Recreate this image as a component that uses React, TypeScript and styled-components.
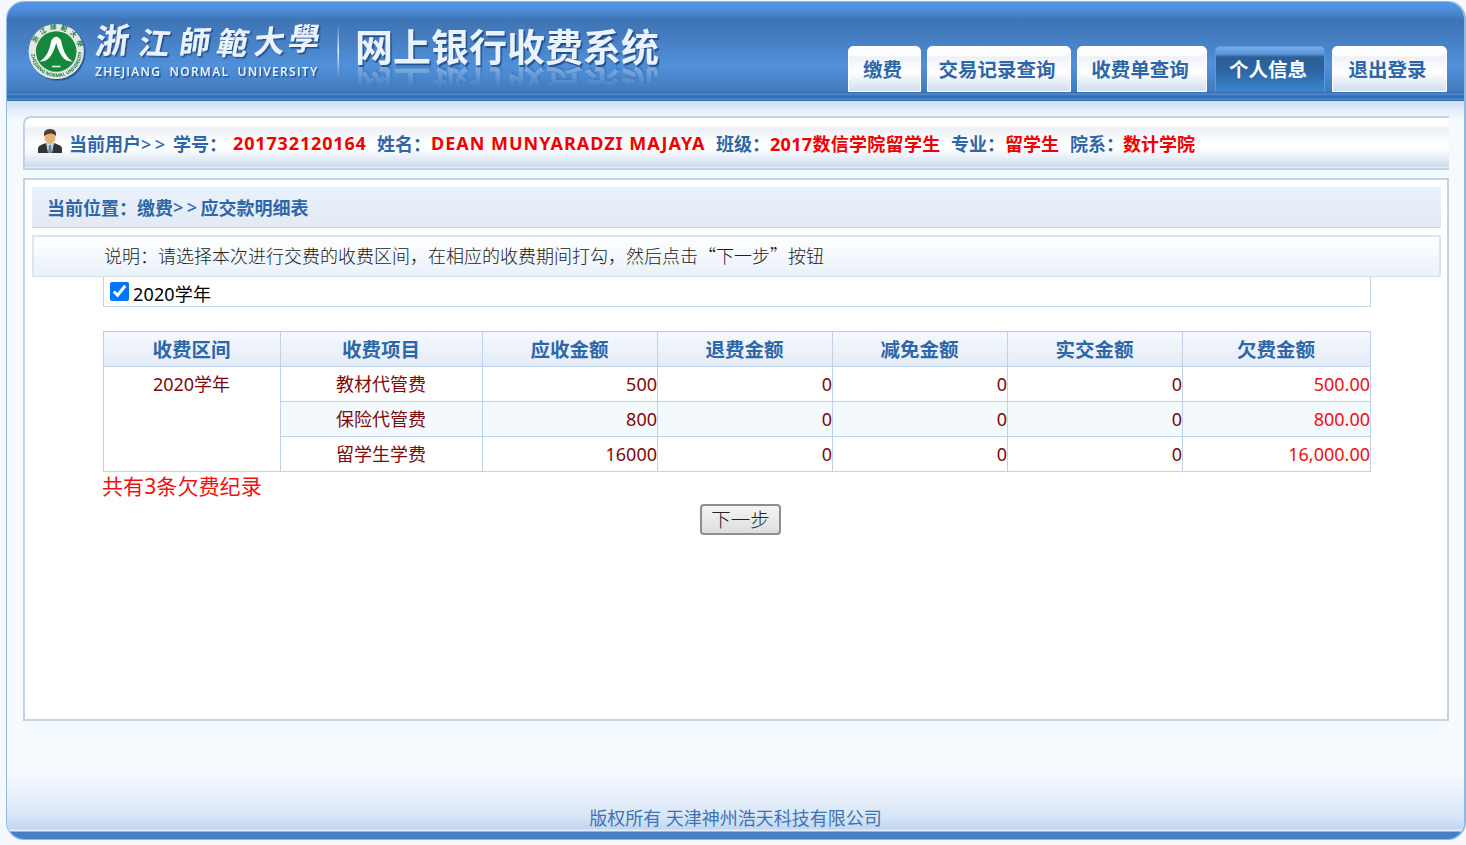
import React from 'react';
import styled, { createGlobalStyle, css } from 'styled-components';

const Global = createGlobalStyle`
  * { box-sizing: border-box; }
  body {
    margin: 0;
    background: #f5f9fe;
    font-family: 'Noto Sans', 'Noto Sans CJK SC', sans-serif;
    font-size: 18px;
  }
`;

const Frame = styled.div`
  width: 1460px;
  height: 839px;
  margin: 1px 0 5px 6px;
  border: 1px solid #8bbbe4;
  border-width: 1px 2px 1px 1px;
  border-radius: 18px;
  overflow: hidden;
  display: flex;
  flex-direction: column;
  background: #f5fafe;
`;

const Header = styled.header`
  height: 99px;
  flex: none;
  padding: 0 17px 0 0;
  display: flex;
  background: linear-gradient(
    #5596e8 0, #4d8bd9 9px, #3d74b3 18px, #4379bb 28px, #5090da 64px,
    #427bbd 89px, #3b70b0 90px, #3b70b0 91px, #5a92cf 92px, #3c78bf 93px, #2f6cb8 95px,
    #2f6cb8 96px, #5f97d2 97px, #3a75bb 98px, #3567a4 99px
  );
`;

const Brand = styled.svg`
  width: 348px;
  height: 99px;
  flex: none;
`;

const Title = styled.h1`
  margin: 23px 0 0;
  height: 40px;
  font: 700 38px/40px 'Noto Sans CJK SC', sans-serif;
  color: #eaf2fd;
  white-space: nowrap;
  text-shadow: 1.5px 1.5px 1px rgba(22, 62, 117, 0.75);
  -webkit-box-reflect: below 2px linear-gradient(transparent 50%, rgba(255, 255, 255, 0.3));
`;

const Tabs = styled.nav`
  margin-left: auto;
  display: flex;
  align-items: flex-start;
  padding-top: 44px;
  gap: 6px;
`;

const Tab = styled.a<{ $width: number; $active?: boolean }>`
  width: ${p => p.$width}px;
  height: 46px;
  border: 1px solid #fff;
  border-radius: 5px 5px 0 0;
  padding: 0 4px 1px 0;
  display: flex;
  align-items: center;
  justify-content: center;
  font-size: 19.5px;
  font-weight: 700;
  white-space: nowrap;
  color: #2e67a7;
  background: linear-gradient(#fff 0, #fff 8px, #edf1f8 10px, #fff 25px, #d0dff1 44px);
  ${p => p.$active && css`
    color: #fff;
    border-color: #5c99dc;
    border-bottom-color: #3a7abd;
    margin: 0 1px 0 2px;
    background: linear-gradient(#74aceb 0, #5c94d8 7px, #2d5f99 10px, #2c639f 22px, #3c86cf 45px);
  `}
`;

const Content = styled.main`
  flex: 1;
  padding: 15px 15px 0 16px;
  background: linear-gradient(#cbdcf1 0, #e3edf9 9px, #f5fafe 20px);
`;

const UserBar = styled.section`
  height: 54px;
  border: 2px solid #c3d3e5;
  border-right: 0;
  border-radius: 8px 0 0 0;
  padding: 0 0 1px 12px;
  display: flex;
  align-items: center;
  font-weight: 700;
  color: #2e67a7;
  white-space: nowrap;
  background: linear-gradient(#fff 0, #fff 8px, #edf1f6 10px, #fff 28px, #fbfdff 32px, #cddded 49px, #fff 50px);
`;

const Person = styled.svg`
  width: 26px;
  height: 26px;
  margin: -4px 6px 0 0;
`;

const Field = styled.span<{ $width: number; $value?: boolean; $spacing?: number }>`
  width: ${p => p.$width}px;
  flex: none;
  color: ${p => (p.$value ? '#f00000' : 'inherit')};
  letter-spacing: ${p => p.$spacing ?? 0}px;
`;

const Thin = styled.span<{ $spacing?: number }>`
  font-weight: 500;
  letter-spacing: ${p => p.$spacing ?? 2}px;
`;

const Panel = styled.section`
  height: 543px;
  margin-top: 8px;
  border: 2px solid #c5d4e4;
  padding: 7px 6px 0 7px;
  background: #fff;
`;

const Location = styled.div`
  height: 41px;
  padding-left: 15px;
  border-bottom: 1px solid #c8d7e5;
  display: flex;
  align-items: center;
  font-weight: 700;
  color: #2e67a7;
  background: linear-gradient(#e9f1fc, #e3eaf4);
`;

const Note = styled.div`
  height: 42px;
  margin-top: 7px;
  padding: 0 0 4px 70px;
  border: 2px solid #dce6f0;
  border-bottom: 1px solid #d5e1ed;
  display: flex;
  align-items: center;
  font-family: 'Noto Sans CJK SC', sans-serif;
  font-weight: 300;
  color: #222;
  background: linear-gradient(#fff, #e9f1fa);
`;

const Inner = styled.div`
  width: 1268px;
  margin-left: 71px;
`;

const Period = styled.label`
  height: 30px;
  border: 1px solid #c3d3e5;
  border-top: 0;
  padding: 2px 6px 0;
  display: flex;
  align-items: center;
  gap: 4px;
  letter-spacing: 0.15px;
`;

const Check = styled.input`
  width: 19px;
  height: 19px;
  margin: -3px 0 0;
  accent-color: #0075ff;
`;

const Table = styled.table`
  width: 1268px;
  margin-top: 24px;
  border-collapse: collapse;
  table-layout: fixed;
  color: #7d0a0a;
`;

const HeadCell = styled.th`
  height: 35px;
  padding: 3px 1px 1px 0;
  border: 1px solid #c0d2e7;
  font-size: 19.5px;
  line-height: 26px;
  color: #2e67a7;
  background: linear-gradient(#f5f9fe, #e3ebf7);
`;

const Cell = styled.td<{ $align?: string; $due?: boolean }>`
  height: 35px;
  padding: ${p => (p.$align ? '4px 0' : '4px 1px 4px 0')};
  border: 1px solid #c0d2e7;
  line-height: 26px;
  vertical-align: top;
  text-align: ${p => p.$align ?? 'center'};
  color: ${p => (p.$due ? '#f01010' : 'inherit')};
`;

const Row = styled.tr<{ $tint?: boolean }>`
  background: ${p => (p.$tint ? '#f4f9fe' : '#fff')};
`;

const Summary = styled.div`
  height: 32px;
  margin-left: -1px;
  line-height: 28px;
  font-size: 21px;
  letter-spacing: 0.1px;
  color: #f01010;
`;

const Next = styled.button`
  display: block;
  width: 81px;
  height: 31px;
  margin: 0 0 0 597px;
  padding: 0 0 2px;
  border: 2px solid #8e8e8e;
  border-radius: 4px;
  font: 300 19.5px/24px 'Noto Sans CJK SC', sans-serif;
  color: #222;
  background: linear-gradient(#f4f4f4, #dedede);
`;

const Footer = styled.footer`
  height: 67px;
  flex: none;
  padding-top: 33px;
  text-align: center;
  line-height: 26px;
  color: #3f74b0;
  background: linear-gradient(#f5fafe 0, #e6effa 28px, #d6e5f7 45px, #c3d6f0 57px, #e0ebf7 58px, #e0ebf7 59px, #4580c2 60px, #4580c2 100%);
`;

const columns: [string, number][] = [
  ['收费区间', 177], ['收费项目', 202], ['应收金额', 175], ['退费金额', 175],
  ['减免金额', 175], ['实交金额', 175], ['欠费金额', 188],
];

const rows = [
  ['教材代管费', '500', '0', '0', '0', '500.00'],
  ['保险代管费', '800', '0', '0', '0', '800.00'],
  ['留学生学费', '16000', '0', '0', '0', '16,000.00'],
];

const calligraphy: [string, number, number, number][] = [
  ['浙', 87, -3, 34], ['江', 130, 2, 31], ['師', 171, -2, 31],
  ['範', 208, 2, 31], ['大', 246, -4, 31], ['學', 280, 0, 31],
];

const Logo = () => (
  <Brand viewBox="0 0 348 99">
    <defs>
      <linearGradient id="rule" x1="0" y1="0" x2="0" y2="1">
        <stop offset="0" stopColor="#fff" stopOpacity="0" />
        <stop offset="0.5" stopColor="#fff" stopOpacity="0.9" />
        <stop offset="1" stopColor="#fff" stopOpacity="0" />
      </linearGradient>
      <filter id="drop" x="-10%" y="-20%" width="120%" height="150%">
        <feDropShadow dx="1.5" dy="1.5" stdDeviation="0.7" floodColor="#163e75" floodOpacity="0.75" />
      </filter>
      <path id="ringTop" d="M27.5 49.5a22 22 0 0 1 44 0" />
      <path id="ringBottom" d="M24 49.5a25.500 25.500 0 0 0 51 0" />
    </defs>
    <g filter="url(#drop)">
      <circle cx="49.2" cy="49.5" r="27.6" fill="#e4e9e6" />
      <circle cx="49.2" cy="49.5" r="20.3" fill="#16883c" />
      <path d="M44.500 38q4.700-7 9.400 0C56 47 58 55 66 59.500 57.500 60 53 54 49.200 41 45.400 54 41 60 32.500 59.500 40.500 55 42.500 47 44.500 38z" fill="#fff" />
      <path d="M45 64.500h8.500" stroke="#dff0e4" strokeWidth="1.600" />
      <text fontSize="6.500" fontWeight="700" fill="#167a38" letterSpacing="3.500">
        <textPath href="#ringTop" startOffset="8">浙江師範大學</textPath>
      </text>
      <text fontSize="4.800" fontWeight="700" fill="#167a38">
        <textPath href="#ringBottom" startOffset="3">ZHEJIANG NORMAL UNIVERSITY</textPath>
      </text>
    </g>
    <g filter="url(#drop)" fill="#eaf2fd">
      {calligraphy.map(([char, x, turn, size]) => (
        <text
          key={char}
          fontSize={size}
          fontWeight="700"
          fontFamily="'Noto Sans CJK TC', sans-serif"
          transform={`translate(${x} ${char === '學' ? 48 : 52}) rotate(${turn}) skewX(-10)`}
        >{char}</text>
      ))}
      <text x="88" y="74" fontSize="12" fontWeight="600" fontFamily="'Open Sans', sans-serif" wordSpacing="4" textLength="222">ZHEJIANG NORMAL UNIVERSITY</text>
    </g>
    <rect x="330.500" y="22" width="1.500" height="54" fill="url(#rule)" />
  </Brand>
);

export default function App() {
  return (
    <>
      <Global />
      <Frame>
        <Header>
          <Logo />
          <Title>网上银行收费系统</Title>
          <Tabs>
            <Tab $width={73}>缴费</Tab>
            <Tab $width={144}>交易记录查询</Tab>
            <Tab $width={130}>收费单查询</Tab>
            <Tab $width={110} $active>个人信息</Tab>
            <Tab $width={115}>退出登录</Tab>
          </Tabs>
        </Header>
        <Content>
          <UserBar>
            <Person viewBox="0 0 26 26">
              <path d="M1 25v-4q0-3 3-4l5-2h8l5 2q3 1 3 4v4z" fill="#303638" />
              <path d="M9 15h8l-2 10h-4z" fill="#c5d5e2" />
              <path d="M12 17h2l1 8h-4z" fill="#6b879f" />
              <ellipse cx="13" cy="9" rx="5.500" ry="7" fill="#e2b276" />
              <path d="M7 8Q6 1 13 1T19 8Q17 5 13 5.500T7 8z" fill="#51402b" />
            </Person>
            <Field $width={104}>当前用户<Thin $spacing={3.5}>&gt;&gt;</Thin></Field>
            <Field $width={60}>学号：</Field>
            <Field $width={144} $value $spacing={0.85}>201732120164</Field>
            <Field $width={54}>姓名：</Field>
            <Field $width={285} $value $spacing={1}>DEAN MUNYARADZI MAJAYA</Field>
            <Field $width={54}>班级：</Field>
            <Field $width={181} $value $spacing={0.3}>2017数信学院留学生</Field>
            <Field $width={54}>专业：</Field>
            <Field $width={65} $value>留学生</Field>
            <Field $width={53}>院系：</Field>
            <Field $width={80} $value>数计学院</Field>
          </UserBar>
          <Panel>
            <Location>当前位置：缴费<Thin $spacing={3.5}>&gt;&gt;</Thin>应交款明细表</Location>
            <Note>说明：请选择本次进行交费的收费区间，在相应的收费期间打勾，然后点击“下一步”按钮</Note>
            <Inner>
              <Period>
                <Check type="checkbox" defaultChecked />
                2020学年
              </Period>
              <Table>
                <colgroup>
                  {columns.map(([name, width]) => <col key={name} style={{ width }} />)}
                </colgroup>
                <thead>
                  <tr>{columns.map(([name]) => <HeadCell key={name}>{name}</HeadCell>)}</tr>
                </thead>
                <tbody>
                  {rows.map(([item, ...amounts], i) => (
                    <Row key={item} $tint={i === 1}>
                      {i === 0 && <Cell rowSpan={3}>2020学年</Cell>}
                      <Cell>{item}</Cell>
                      {amounts.map((amount, j) => (
                        <Cell key={j} $align="right" $due={j === 4}>{amount}</Cell>
                      ))}
                    </Row>
                  ))}
                </tbody>
              </Table>
              <Summary>共有3条欠费纪录</Summary>
              <Next>下一步</Next>
            </Inner>
          </Panel>
        </Content>
        <Footer>版权所有 天津神州浩天科技有限公司</Footer>
      </Frame>
    </>
  );
}
